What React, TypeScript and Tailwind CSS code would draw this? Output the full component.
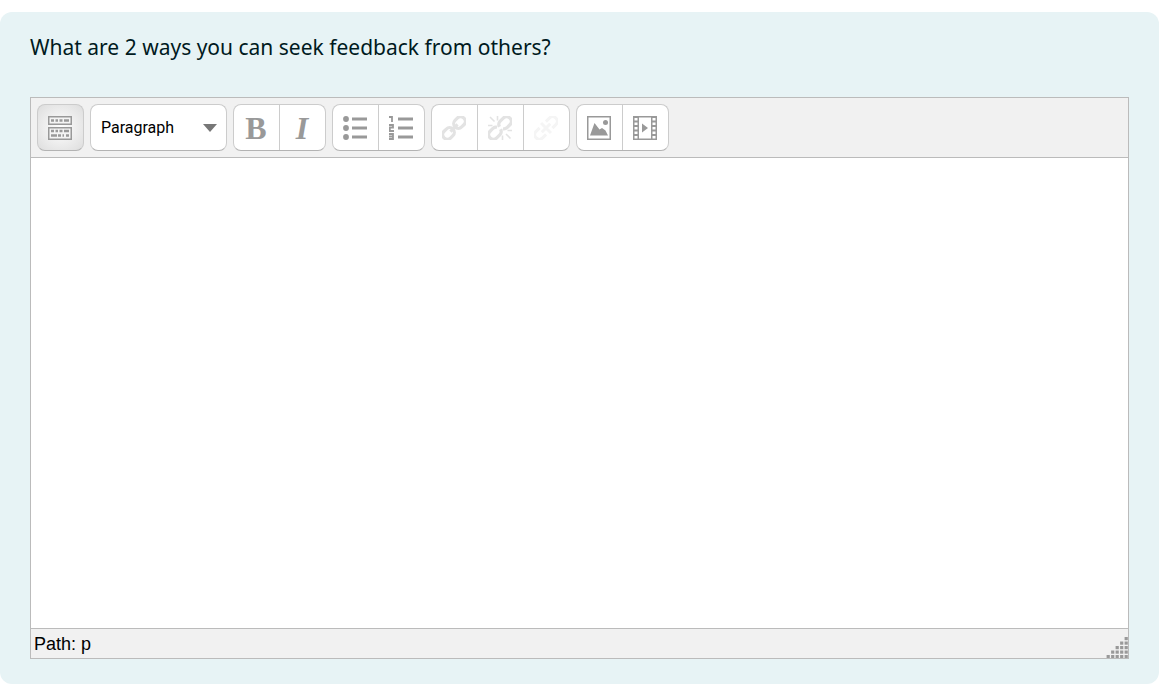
import React from "react";

type ToolProps = {
  label: string;
  disabled?: boolean;
  children: React.ReactNode;
};

const Tool = ({ label, disabled, children }: ToolProps) => (
  <button
    type="button"
    title={label}
    aria-label={label}
    disabled={disabled}
    className="box-content flex h-[45px] w-11 items-center justify-center pr-px text-[#999999]"
  >
    {children}
  </button>
);

const ToolGroup = ({ children }: { children: React.ReactNode }) => (
  <div className="flex divide-x divide-[#cccccc] overflow-hidden rounded-lg border border-[#cccccc] border-b-[#b3b3b3] bg-white">
    {children}
  </div>
);

const ToggleIcon = () => (
  <svg width="24" height="24" viewBox="0 0 24 24" fill="none">
    <rect x="0.75" y="0.75" width="22.5" height="7.5" fill="#f4f4f4" stroke="#999999" strokeWidth="1.5" />
    <rect x="0.75" y="11.75" width="22.5" height="11.5" fill="#f4f4f4" stroke="#999999" strokeWidth="1.5" />
    <path
      d="M3 4.5h3M7.5 4.5h2.5M11.5 4.5h3M16 4.5h5M3 15h3M7.5 15h2.5M11.5 15h3M16 15h5M3 19.5h6M10 19.5h3M14.5 19.5h1.5M18 19.5h3"
      stroke="#999999"
      strokeWidth="2.5"
    />
  </svg>
);

const BulletIcon = () => (
  <svg width="24" height="24" viewBox="0 0 24 24" fill="currentColor">
    <circle cx="3" cy="3" r="2.9" />
    <circle cx="3" cy="12" r="2.9" />
    <circle cx="3" cy="21" r="2.9" />
    <path d="M9 1.5h15v3H9zM9 10.5h15v3H9zM9 19.5h15v3H9z" />
  </svg>
);

const NumberIcon = () => (
  <svg width="24" height="24" viewBox="0 0 24 24" fill="none" stroke="currentColor">
    <path d="M0 1h3v5M0 9h4v2.5H.8V15H5M0 18h4v5H0M0 20.5h4" strokeWidth="1.8" />
    <path d="M9 3h15M9 12h15M9 21h15" strokeWidth="3" />
  </svg>
);

const LinkIcon = () => (
  <svg width="24" height="24" viewBox="0 0 24 24" fill="none" stroke="#e3e3e3" strokeWidth="3.2">
    <g transform="rotate(-45 12 12)">
      <rect x="-2" y="7.3" width="12.5" height="9.4" rx="4.7" />
      <rect x="13.5" y="7.3" width="12.5" height="9.4" rx="4.7" />
      <path d="M7 12h10" />
    </g>
  </svg>
);

const UnlinkIcon = () => (
  <svg width="24" height="24" viewBox="0 0 24 24" fill="none" stroke="#e3e3e3">
    <g transform="rotate(-45 12 12)" strokeWidth="3.2">
      <path d="M10.5 9.5a4.5 4.5 0 0 0-3.5-2.2H2.7a4.7 4.7 0 0 0 0 9.4H7a4.7 4.7 0 0 0 4.5-3.5" />
      <path d="M13.5 14.5a4.5 4.5 0 0 0 3.5 2.2h4.3a4.7 4.7 0 0 0 0-9.4H17a4.7 4.7 0 0 0-4.5 3.5" />
    </g>
    <path d="M9.5 0v4.5M2 1l4.5 4.5M0 9.5h4.5M14.5 19.5V24M18 18l4.5 4.5M19.5 14.5H24" strokeWidth="1.6" />
  </svg>
);

const NoLinkIcon = () => (
  <svg width="24" height="24" viewBox="0 0 24 24" fill="none" stroke="#f5f5f5" strokeWidth="3">
    <g transform="rotate(-45 12 12)">
      <path d="M7.5 7.4H2.6a4.6 4.6 0 0 0 0 9.2h4.9" />
      <path d="M16.5 7.4h4.9a4.6 4.6 0 0 1 0 9.2h-4.9" />
      <path d="M6 12h12M12 5v14" />
    </g>
  </svg>
);

const ImageIcon = () => (
  <svg width="24" height="24" viewBox="0 0 24 24" fill="currentColor">
    <rect x="0.75" y="0.75" width="22.5" height="22.5" fill="none" stroke="currentColor" strokeWidth="1.5" />
    <circle cx="18.5" cy="6.5" r="2.5" />
    <path d="M3 19.5 7.5 7l5 6.5L15 12l3.5 2.5 2.5 5z" />
  </svg>
);

const MediaIcon = () => (
  <svg width="24" height="24" viewBox="0 0 24 24" fill="currentColor">
    <path
      fillRule="evenodd"
      d="M0 0h24v24H0zM6 1.5v21h12v-21zM1.5 2v2.5h3V2zM1.5 6.5V9h3V6.5zM1.5 11v2.5h3V11zM1.5 15.5V18h3v-2.5zM1.5 20v2.5h3V20zM19.5 2v2.5h3V2zM19.5 6.5V9h3V6.5zM19.5 11v2.5h3V11zM19.5 15.5V18h3v-2.5zM19.5 20v2.5h3V20z"
    />
    <path d="M9 7.5v9l6-4.5z" />
  </svg>
);

// staircase of dots, one more in each row down
const ResizeGrip = () => (
  <svg width="22" height="21" viewBox="0 0 22 21" fill="#999999" className="cursor-se-resize">
    {[0, 1, 2, 3, 4].map((row) =>
      Array.from({ length: row + 1 }, (_, i) => (
        <rect key={`${row}-${i}`} x={18.6 - i * 4.5} y={row * 4.5} width="3.2" height="3.2" />
      ))
    )}
  </svg>
);

const App = () => {
  return (
    <main className="mt-3 mr-[14px] rounded-xl bg-[#e7f3f5] px-[30px] pt-[19px] pb-[25px]">
      <label
        htmlFor="answer"
        className="mb-[34px] block font-['Noto_Sans',sans-serif] text-[21px] leading-8 text-[#001a1e]"
      >
        What are 2 ways you can seek feedback from others?
      </label>

      <div className="border border-[#bbbbbb] bg-[#f1f1f1]">
        {/* Toolbar */}
        <div className="flex flex-wrap gap-[6px] border-b border-[#bbbbbb] p-[6px]">
          <button
            type="button"
            title="Toolbar toggle"
            aria-label="Toolbar toggle"
            className="flex h-[47px] w-[47px] items-center justify-center rounded-lg border border-[#cccccc] border-b-[#b3b3b3] bg-radial from-white to-[#dddddd] pr-px"
          >
            <ToggleIcon />
          </button>

          <div className="relative">
            <select
              aria-label="Format"
              className="h-[47px] w-[137px] appearance-none rounded-lg border border-[#cccccc] border-b-[#b3b3b3] bg-white pl-[10px] font-['Roboto',sans-serif] text-base text-black"
            >
              <option>Paragraph</option>
              <option>Heading 1</option>
              <option>Heading 2</option>
            </select>
            <svg
              width="14"
              height="8"
              viewBox="0 0 14 8"
              fill="#777777"
              className="pointer-events-none absolute top-5 right-[10px]"
            >
              <path d="M0 0h14L7 8z" />
            </svg>
          </div>

          <ToolGroup>
            <Tool label="Bold">
              <span className="font-['Liberation_Serif',serif] text-[32px] leading-8 font-bold">B</span>
            </Tool>
            <Tool label="Italic">
              <span className="font-['Liberation_Serif',serif] text-[32px] leading-8 font-bold italic">I</span>
            </Tool>
          </ToolGroup>

          <ToolGroup>
            <Tool label="Unordered list">
              <BulletIcon />
            </Tool>
            <Tool label="Ordered list">
              <NumberIcon />
            </Tool>
          </ToolGroup>

          <ToolGroup>
            <Tool label="Insert link" disabled>
              <LinkIcon />
            </Tool>
            <Tool label="Unlink" disabled>
              <UnlinkIcon />
            </Tool>
            <Tool label="Prevent automatic linking" disabled>
              <NoLinkIcon />
            </Tool>
          </ToolGroup>

          <ToolGroup>
            <Tool label="Insert image">
              <ImageIcon />
            </Tool>
            <Tool label="Insert media">
              <MediaIcon />
            </Tool>
          </ToolGroup>
        </div>

        {/* Editing area */}
        <textarea id="answer" className="block h-[470px] w-full resize-none bg-white p-3 text-lg outline-none" />

        {/* Status bar */}
        <div className="flex h-[30px] items-center justify-between border-t border-[#bbbbbb] pl-[3px] font-['Liberation_Sans',sans-serif] text-lg text-black">
          <span>Path: p</span>
          <span className="self-end">
            <ResizeGrip />
          </span>
        </div>
      </div>
    </main>
  );
};

export default App;
